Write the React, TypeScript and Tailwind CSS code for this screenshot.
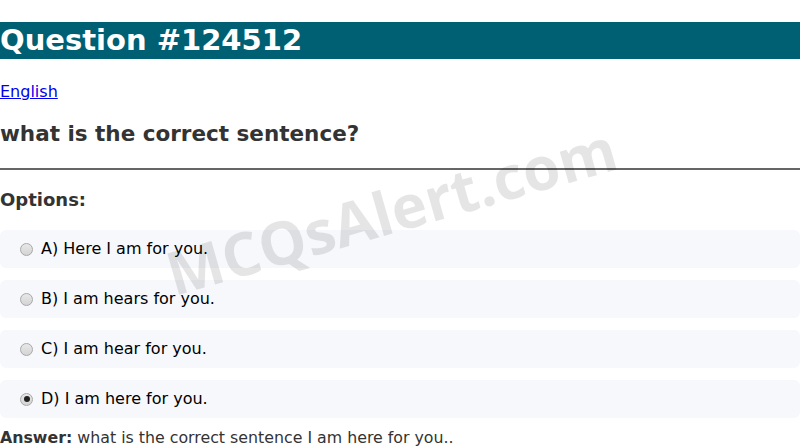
import React from "react";

const options = [
  { id: "a", label: "A) Here I am for you." },
  { id: "b", label: "B) I am hears for you." },
  { id: "c", label: "C) I am hear for you." },
  { id: "d", label: "D) I am here for you." },
];

function Radio({ checked }: { checked: boolean }) {
  return (
    <span className="mr-[8px] flex h-[13px] w-[13px] items-center justify-center rounded-full border border-[#a8a8a8] bg-gradient-to-b from-[#e8e8e8] to-[#d4d4d4]">
      {checked && <span className="h-[6px] w-[6px] rounded-full bg-[#222]" />}
    </span>
  );
}

export default function App() {
  return (
    <div className="relative w-[800px] h-[448px] overflow-hidden bg-white font-['DejaVu_Sans',sans-serif] text-[#333]">
      <div className="h-[22px]" />
      <h1 className="bg-[#006073] text-white font-bold text-[29px] leading-[37px] h-[37px]">Question #124512</h1>
      <div className="mt-[21px]">
        <a href="#" className="text-[#0000ee] underline text-[16px] leading-[20px]">English</a>
      </div>
      <h2 className="mt-[15px] font-bold text-[21.5px] leading-[30px]">what is the correct sentence?</h2>
      <hr className="mt-[19px] border-0 border-t-2 border-[#666]" />
      <h3 className="mt-[18px] font-bold text-[18px] leading-[24px]">Options:</h3>
      <div className="mt-[18px] flex flex-col gap-[12px]">
        {options.map((o) => (
          <label key={o.id} className="flex items-center h-[38px] pl-[20px] bg-[#f7f8fc] rounded-[6px] text-[16px] text-black">
            <Radio checked={o.id === "d"} />
            {o.label}
          </label>
        ))}
      </div>
      <p className="mt-[10px] text-[15.8px] leading-[20px]">
        <b>Answer:</b> what is the correct sentence I am here for you..
      </p>
      <div className="pointer-events-none absolute left-[176px] top-[243px] -rotate-[16deg] origin-bottom-left font-['Open_Sans',sans-serif] text-[60px] leading-[60px] font-bold text-black/[0.1] whitespace-nowrap">
        MCQsAlert.com
      </div>
    </div>
  );
}
